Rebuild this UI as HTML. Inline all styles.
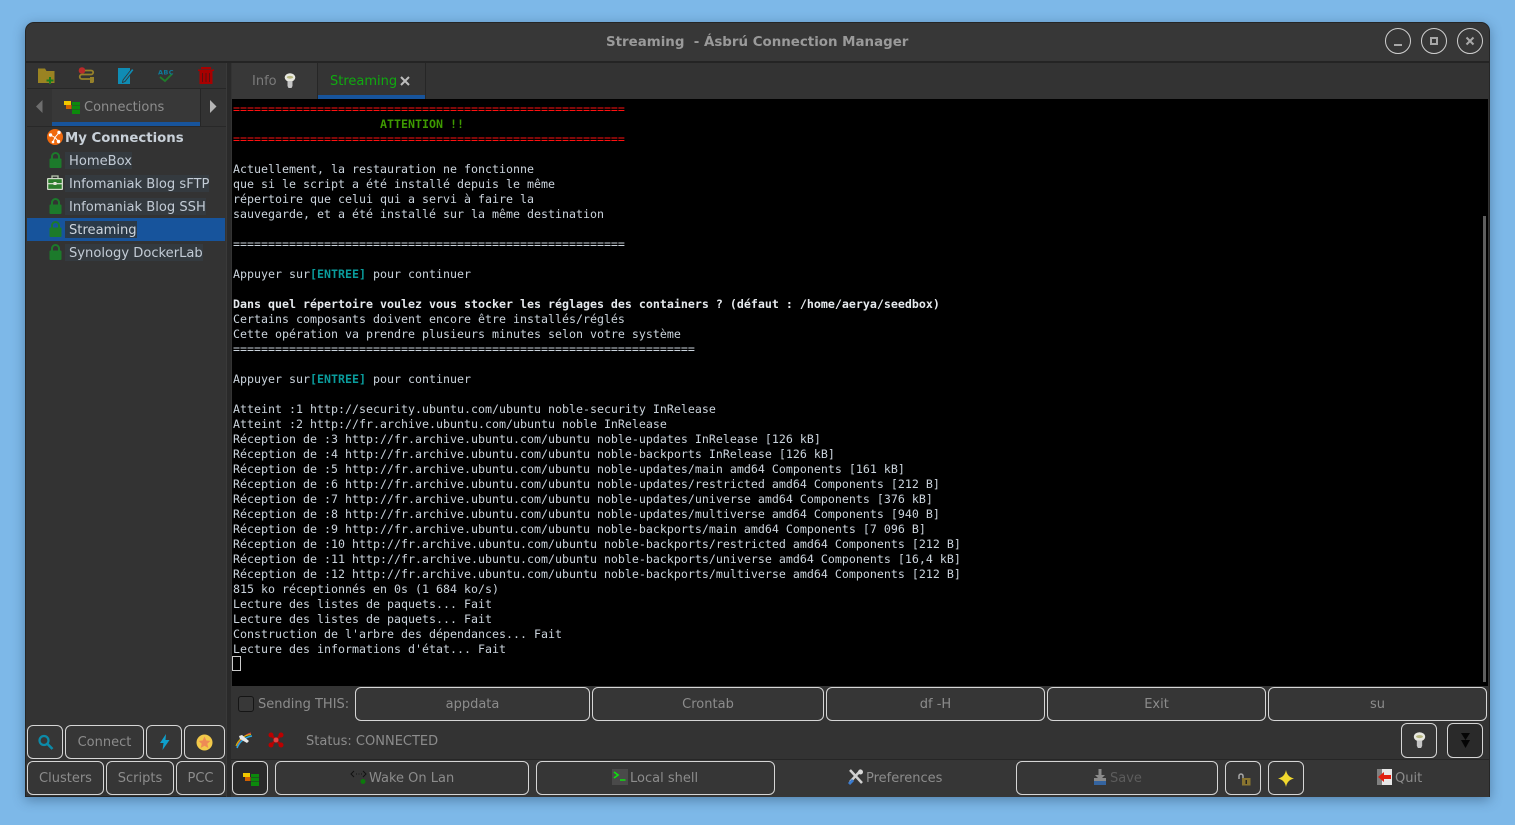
<!DOCTYPE html>
<html><head><meta charset="utf-8"><title>Streaming - Ásbrú Connection Manager</title>
<style>
html,body{margin:0;padding:0;width:1515px;height:825px;overflow:hidden;background:#7db8e8;font-family:"DejaVu Sans","Liberation Sans",sans-serif;}
.a{position:absolute}
#win{position:absolute;left:25px;top:22px;width:1465px;height:775px;background:#333;border-radius:9px 9px 0 0;box-shadow:0 3px 12px rgba(30,60,90,.45);outline:0;overflow:hidden;border:1px solid #252525;box-sizing:border-box}
#root{position:absolute;left:0;top:0;width:1515px;height:825px}
.b{position:absolute;box-sizing:border-box;border:1px solid #d6d6d6;border-radius:6px;background:#363636;color:#8c8c8c;font-size:13px;display:flex;align-items:center;justify-content:center;white-space:pre}
.nb{position:absolute;color:#8c8c8c;font-size:13px;white-space:pre}
.row{position:absolute;font-size:13.1px;color:#c3ccd6;white-space:pre;line-height:20px;height:17px;background:#343a3f;padding:0 0 0 4px}
#term{position:absolute;left:232px;top:99px;width:1256px;height:587px;background:#000;overflow:hidden}
#term pre{margin:0;position:absolute;left:1px;top:3px;font:11.63px/15px "DejaVu Sans Mono","Liberation Mono",monospace;color:#cbd4dd;letter-spacing:0}
.r{color:#ff1010}.g{color:#3e9a00;font-weight:bold}.c{color:#0a9c9c;font-weight:bold}.w{color:#e6eaee;font-weight:bold}
.ci{position:absolute;width:26px;height:26px;box-sizing:border-box;border:1px solid #cfcfcf;border-radius:50%}
svg{position:absolute;overflow:visible}
</style></head><body>
<div id="root">
<div id="win"></div>
<!-- title bar -->
<div class="a" style="left:26px;top:23px;width:1463px;height:38px;background:#373737;border-radius:8px 8px 0 0"></div>
<div class="a" style="left:26px;top:61px;width:1463px;height:2px;background:#242424"></div>
<div class="nb" style="left:606px;top:34px;font-size:13.4px;font-weight:bold;color:#9a9a9a;line-height:18px">Streaming  - Ásbrú Connection Manager</div>
<div class="ci" style="left:1385px;top:28px"></div>
<div class="a" style="left:1394px;top:44px;width:8px;height:2px;background:#a8a8a8"></div>
<div class="ci" style="left:1421px;top:28px"></div>
<div class="a" style="left:1430px;top:37px;width:8px;height:8px;box-sizing:border-box;border:2px solid #a8a8a8"></div>
<div class="ci" style="left:1457px;top:28px"></div>
<svg style="left:1466px;top:37px" width="8" height="8"><path d="M.5.5l7 7M7.5.5l-7 7" stroke="#a8a8a8" stroke-width="2"/></svg>

<!-- left pane -->
<div class="a" style="left:226px;top:63px;width:5px;height:734px;background:#2a2a2a;border-left:1px solid #3a3a3a;box-sizing:border-box"></div>
<div class="a" style="left:27px;top:88px;width:199px;height:1px;background:#272727"></div>
<svg style="left:38px;top:67px" width="17" height="17"><path d="M0 3V1.500h7L8.500 4H16.500V16H0z" fill="#9a8322"/><path d="M11 10h2v2.500h2.500v2H13V17h-2v-2.500H8.500v-2H11z" fill="#1c7d1c"/></svg>
<svg style="left:78px;top:67px" width="17" height="17"><circle cx="4" cy="3.500" r="3.300" fill="#b92a2a"/><path d="M7 3.500h6c3 0 3 4-.500 4H4c-3 0-3 4.500 0 4.500h8" fill="none" stroke="#96812a" stroke-width="1.800"/><path d="M12 10h4v5l-1 1h-3z" fill="#96812a"/></svg>
<svg style="left:118px;top:67px" width="17" height="17"><path d="M0 1h12v16H0z" fill="#0f8cb4"/><path d="M5 13L14 1.500l2 1.500-9 11.500-2.500 1z" fill="#0f8cb4" stroke="#333" stroke-width=".8"/></svg>
<svg style="left:158px;top:68px" width="16" height="15"><path d="M2 9l5 4 7-7" fill="none" stroke="#1f7d2a" stroke-width="1.800"/><text x="0" y="6.500" font-family="DejaVu Sans" font-weight="bold" font-size="6.500" fill="#0f7a99" letter-spacing=".4">ABC</text></svg>
<svg style="left:198px;top:67px" width="16" height="17"><path d="M0 2.500h16V4H0zM3 0h10v2H3z" fill="#a80000"/><path d="M1.500 4h13v13h-13z" fill="#a80000"/><path d="M4.500 6v9M8 6v9M11.500 6v9" stroke="#5a1010" stroke-width="1"/></svg>

<!-- conn tab strip -->
<div class="a" style="left:27px;top:89px;width:25px;height:37px;background:#333;border-right:1px solid #262626"></div>
<svg style="left:36px;top:100px" width="7" height="13"><path d="M6.500 0v13L0 6.500z" fill="#6e6e6e"/></svg>
<div class="a" style="left:52px;top:89px;width:148px;height:33px;background:#383838"></div>
<div class="a" style="left:52px;top:122px;width:148px;height:4px;background:#17549c"></div>
<div class="a" style="left:200px;top:89px;width:26px;height:37px;background:#333;border-left:1px solid #262626;box-sizing:border-box"></div>
<svg style="left:210px;top:100px" width="7" height="13"><path d="M0 0v13L6.500 6.500z" fill="#b5b5b5"/></svg>
<svg style="left:64px;top:101px" width="16" height="13"><rect x="0" y="0" width="7" height="4" fill="#f0c800"/><rect x="2" y="4" width="5.500" height="4" fill="#d06000"/><rect x="8" y="1" width="8" height="3.500" fill="#0c8a0c"/><rect x="8" y="5" width="8" height="3.500" fill="#0c8a0c"/><rect x="8" y="9" width="8" height="4" fill="#0c8a0c"/></svg>
<div class="nb" style="left:84px;top:99px;line-height:18px;color:#8d8d8d">Connections</div>
<div class="a" style="left:27px;top:126px;width:199px;height:1px;background:#282828"></div>

<!-- tree -->
<svg style="left:47px;top:129px" width="16" height="16"><circle cx="8" cy="8" r="8" fill="#f06a0e"/><path d="M3.500 6L8 8.500M12 3.500L8 8.500l3.500 4M8 8.500L6 13" stroke="#fff" stroke-width="1" fill="none"/><circle cx="3.500" cy="6" r="1.700" fill="#fff"/><circle cx="12" cy="3.500" r="1.700" fill="#fff"/><circle cx="11.500" cy="12.500" r="1.700" fill="#fff"/><circle cx="6" cy="13" r="1.300" fill="#fff"/></svg>
<div class="nb" style="left:65px;top:129px;font-size:13.3px;font-weight:bold;line-height:20px;color:#c8d0d8">My Connections</div>
<div class="a" style="left:27px;top:218px;width:198px;height:23px;background:#17549c"></div>
<svg width="0" height="0" style="left:0;top:0"><defs><symbol id="lk" viewBox="0 0 13 16"><path d="M3 7V4.500a3.500 3.500 0 0 1 7 0V7" fill="none" stroke="#1c7a2b" stroke-width="2"/><rect x="0.500" y="6.500" width="12" height="9.500" rx="1" fill="#1c7a2b"/></symbol></defs></svg>
<svg style="left:49px;top:152px" width="13" height="16"><use href="#lk"/></svg>
<svg style="left:47px;top:175px" width="16" height="15"><path d="M5 3V1h6v2" fill="none" stroke="#b8c8b0" stroke-width="1.300"/><rect x="0" y="3" width="16" height="12" rx="1" fill="#cfd8c8"/><rect x="1.300" y="4.200" width="13.400" height="3.800" fill="#2c7d2c"/><rect x="1.300" y="9.300" width="13.400" height="4.500" fill="#2c7d2c"/><rect x="6.500" y="7" width="3" height="3" fill="#e5e5d8"/></svg>
<svg style="left:49px;top:198px" width="13" height="16"><use href="#lk"/></svg>
<svg style="left:49px;top:221px" width="13" height="16"><use href="#lk"/></svg>
<svg style="left:49px;top:244px" width="13" height="16"><use href="#lk"/></svg>
<div class="row" style="left:65px;top:152px">HomeBox</div>
<div class="row" style="left:65px;top:175px">Infomaniak Blog sFTP</div>
<div class="row" style="left:65px;top:198px">Infomaniak Blog SSH</div>
<div class="row" style="left:65px;top:221px;background:#2b3a48;color:#cdd5dd">Streaming</div>
<div class="row" style="left:65px;top:244px">Synology DockerLab</div>

<!-- left buttons -->
<div class="b" style="left:27px;top:725px;width:36px;height:34px"><svg style="left:10px;top:8px" width="16" height="17"><circle cx="6" cy="6.500" r="4.500" fill="none" stroke="#0c8aa8" stroke-width="2.200"/><path d="M9.500 10l5 5" stroke="#0c8aa8" stroke-width="2.600"/></svg></div>
<div class="b" style="left:65px;top:725px;width:79px;height:34px">Connect</div>
<div class="b" style="left:146px;top:725px;width:36px;height:34px"><svg style="left:13px;top:8px" width="10" height="16"><path d="M6 0L0 9h3.500L2.500 16 9.500 6H5.500z" fill="#0ea0cc"/></svg></div>
<div class="b" style="left:184px;top:725px;width:41px;height:34px"><svg style="left:11px;top:8px" width="17" height="17"><circle cx="8.500" cy="8.500" r="8" fill="#f2c94a"/><path d="M8.500 2.500l1.800 4 4.200.4-3.200 2.900 1 4.200-3.800-2.200-3.800 2.200 1-4.200L2.500 6.900l4.200-.4z" fill="#ee8a55"/></svg></div>
<div class="b" style="left:27px;top:761px;width:77px;height:34px">Clusters</div>
<div class="b" style="left:106px;top:761px;width:68px;height:34px">Scripts</div>
<div class="b" style="left:176px;top:761px;width:49px;height:34px">PCC</div>

<!-- right tabs -->
<div class="a" style="left:232px;top:63px;width:85px;height:36px;background:#383838"></div>
<div class="a" style="left:317px;top:63px;width:1px;height:36px;background:#262626"></div>
<div class="a" style="left:318px;top:63px;width:107px;height:32px;background:#343434"></div>
<div class="a" style="left:318px;top:95px;width:107px;height:4px;background:#17549c"></div>
<div class="a" style="left:425px;top:63px;width:1px;height:36px;background:#262626"></div>
<div class="nb" style="left:252px;top:73px;line-height:18px;color:#7b7b7b">Info</div>
<svg style="left:284px;top:73px" width="12" height="15" viewBox="0 0 11 15"><ellipse cx="5.500" cy="4.500" rx="5.300" ry="4.300" fill="#e8e8e0"/><ellipse cx="5.500" cy="4.300" rx="3.200" ry="1.400" fill="#b8b880"/><path d="M3 8h5v5l-1 2H4l-1-2z" fill="#c5c5c5"/></svg>
<div class="nb" style="left:330px;top:73px;line-height:18px;color:#10aa10">Streaming</div>
<svg style="left:400px;top:76px" width="10" height="10"><path d="M1 1l8 8M9 1l-8 8" stroke="#bdbdbd" stroke-width="2"/></svg>

<!-- terminal -->
<div id="term"><pre><span class="r">========================================================</span>
                     <span class="g">ATTENTION !!</span>
<span class="r">========================================================</span>

Actuellement, la restauration ne fonctionne
que si le script a été installé depuis le même
répertoire que celui qui a servi à faire la
sauvegarde, et a été installé sur la même destination

========================================================

Appuyer sur<span class="c">[ENTREE]</span> pour continuer

<span class="w">Dans quel répertoire voulez vous stocker les réglages des containers ? (défaut : /home/aerya/seedbox)</span>
Certains composants doivent encore être installés/réglés
Cette opération va prendre plusieurs minutes selon votre système
==================================================================

Appuyer sur<span class="c">[ENTREE]</span> pour continuer

Atteint :1 http://security.ubuntu.com/ubuntu noble-security InRelease
Atteint :2 http://fr.archive.ubuntu.com/ubuntu noble InRelease
Réception de :3 http://fr.archive.ubuntu.com/ubuntu noble-updates InRelease [126 kB]
Réception de :4 http://fr.archive.ubuntu.com/ubuntu noble-backports InRelease [126 kB]
Réception de :5 http://fr.archive.ubuntu.com/ubuntu noble-updates/main amd64 Components [161 kB]
Réception de :6 http://fr.archive.ubuntu.com/ubuntu noble-updates/restricted amd64 Components [212 B]
Réception de :7 http://fr.archive.ubuntu.com/ubuntu noble-updates/universe amd64 Components [376 kB]
Réception de :8 http://fr.archive.ubuntu.com/ubuntu noble-updates/multiverse amd64 Components [940 B]
Réception de :9 http://fr.archive.ubuntu.com/ubuntu noble-backports/main amd64 Components [7 096 B]
Réception de :10 http://fr.archive.ubuntu.com/ubuntu noble-backports/restricted amd64 Components [212 B]
Réception de :11 http://fr.archive.ubuntu.com/ubuntu noble-backports/universe amd64 Components [16,4 kB]
Réception de :12 http://fr.archive.ubuntu.com/ubuntu noble-backports/multiverse amd64 Components [212 B]
815 ko réceptionnés en 0s (1 684 ko/s)
Lecture des listes de paquets... Fait
Lecture des listes de paquets... Fait
Construction de l'arbre des dépendances... Fait
Lecture des informations d'état... Fait</pre>
<div class="a" style="left:0;top:557px;width:9px;height:15px;box-sizing:border-box;border:1px solid #ccc"></div>
<div class="a" style="left:1251px;top:117px;width:3px;height:466px;background:#5e5e5e"></div>
</div>

<!-- sending row -->
<div class="a" style="left:238px;top:696px;width:16px;height:16px;box-sizing:border-box;border:1px solid #151515;border-radius:3px;background:#383838"></div>
<div class="nb" style="left:258px;top:696px;line-height:18px">Sending THIS:</div>
<div class="b" style="left:355px;top:687px;width:235px;height:34px">appdata</div>
<div class="b" style="left:592px;top:687px;width:232px;height:34px">Crontab</div>
<div class="b" style="left:826px;top:687px;width:219px;height:34px">df -H</div>
<div class="b" style="left:1047px;top:687px;width:219px;height:34px">Exit</div>
<div class="b" style="left:1268px;top:687px;width:219px;height:34px">su</div>

<!-- status row -->
<svg style="left:236px;top:732px" width="16" height="16"><path d="M1 15C2 9 8 3 15 1" fill="none" stroke="#e84040" stroke-width="1"/><path d="M0 14C2 8 8 3 15 2.500" fill="none" stroke="#d8c000" stroke-width="1"/><path d="M1 16C3 10 9 5 16 4" fill="none" stroke="#2aa8e0" stroke-width="1.500"/><path d="M3 4l3-1 7 6-2 2-7-4z" fill="#e8e8e8"/></svg>
<svg style="left:268px;top:732px" width="16" height="16"><path d="M3 3l10 10M13 3L3 13" stroke="#a80808" stroke-width="2.500"/><circle cx="3" cy="3" r="2.500" fill="#b00"/><circle cx="13" cy="3" r="2.500" fill="#b00"/><circle cx="3" cy="13" r="2.500" fill="#b00"/><circle cx="13" cy="13" r="2.500" fill="#b00"/><circle cx="8" cy="8" r="2.500" fill="#e84040"/></svg>
<div class="nb" style="left:306px;top:733px;line-height:18px">Status: CONNECTED</div>
<div class="b" style="left:1401px;top:723px;width:36px;height:35px"><svg style="left:11px;top:8px" width="13" height="16" viewBox="0 0 11 15"><ellipse cx="5.500" cy="4.500" rx="5.300" ry="4.300" fill="#e8e8e0"/><ellipse cx="5.500" cy="4.300" rx="3.200" ry="1.400" fill="#b8b880"/><path d="M3 8h5v5l-1 2H4l-1-2z" fill="#c5c5c5"/></svg></div>
<div class="b" style="left:1447px;top:723px;width:36px;height:35px;background:#2a2a2a"><svg style="left:13px;top:9px" width="9" height="15"><path d="M0 0h9L4.500 7zM0 7h9L4.500 15z" fill="#050505"/></svg></div>

<!-- bottom row -->
<div class="a" style="left:231px;top:759px;width:1258px;height:1px;background:#262626"></div>
<div class="a" style="left:231px;top:760px;width:1258px;height:37px;background:#363636"></div>
<div class="b" style="left:232px;top:761px;width:36px;height:34px;background:#2a2a2a"><svg style="left:10px;top:11px" width="16" height="13"><rect x="0" y="0" width="7" height="4" fill="#f0c800"/><rect x="2" y="4" width="5.500" height="4" fill="#d06000"/><rect x="8" y="1" width="8" height="3.500" fill="#0c8a0c"/><rect x="8" y="5" width="8" height="3.500" fill="#0c8a0c"/><rect x="8" y="9" width="8" height="4" fill="#0c8a0c"/></svg></div>
<div class="b" style="left:275px;top:761px;width:254px;height:34px"></div>
<svg style="left:351px;top:769px" width="16" height="16"><path d="M3 2L0 5l3 3M12 2l3 3-3 3" fill="none" stroke="#111" stroke-width="1"/><path d="M5 5h1M7.500 5h1M10 5h1" stroke="#111"/><circle cx="12" cy="12.500" r="2.500" fill="#0c7a0c"/></svg>
<div class="nb" style="left:369px;top:770px;line-height:18px">Wake On Lan</div>
<div class="b" style="left:536px;top:761px;width:239px;height:34px"></div>
<div class="a" style="left:612px;top:769px;width:16px;height:16px;background:#4a4a4a"></div>
<svg style="left:614px;top:772px" width="12" height="10"><path d="M0 0l4 3-4 3" fill="none" stroke="#0ee00e" stroke-width="1.700"/><path d="M6 8h5.500" stroke="#0ee00e" stroke-width="1.500"/></svg>
<div class="nb" style="left:630px;top:770px;line-height:18px">Local shell</div>
<svg style="left:848px;top:769px" width="15" height="16"><path d="M2 1l12 13" stroke="#d0d0d0" stroke-width="2.500"/><path d="M13 1L2 13" stroke="#d0d0d0" stroke-width="2.500"/><path d="M1 15l4-4" stroke="#3a7cd0" stroke-width="3"/><circle cx="12.500" cy="3" r="2.500" fill="#d8d8d8"/></svg>
<div class="nb" style="left:866px;top:770px;line-height:18px">Preferences</div>
<div class="b" style="left:1016px;top:761px;width:202px;height:34px"></div>
<svg style="left:1094px;top:769px" width="12" height="16"><path d="M4.500 0h3v6H11L6 11 1 6h3.500z" fill="#8a8a8a"/><rect x="0" y="9" width="12" height="3" fill="#8a8a8a"/><rect x="0" y="12" width="12" height="4" fill="#3464a0"/></svg>
<div class="nb" style="left:1110px;top:770px;line-height:18px;color:#5c5c5c">Save</div>
<div class="b" style="left:1225px;top:761px;width:36px;height:34px"><svg style="left:12px;top:11px" width="13" height="13"><path d="M1 6V3a2 2 0 0 1 4 0v3" fill="none" stroke="#a8a8a8" stroke-width="1.500"/><rect x="4" y="5" width="8.500" height="7.500" fill="#8a7530"/><rect x="7.500" y="7" width="1.500" height="4" fill="#222"/></svg></div>
<div class="b" style="left:1268px;top:761px;width:36px;height:34px"><svg style="left:9px;top:8px" width="16" height="17"><path d="M8 0q1.200 7 8 8.500-6.800 1.500-8 8.500-1.200-7-8-8.500Q6.800 7 8 0z" fill="#f2d92e"/></svg></div>
<svg style="left:1377px;top:769px" width="16" height="16"><rect x="0" y="0" width="15" height="16" fill="#e8e8e8"/><rect x="0" y="0" width="5" height="16" fill="#808080"/><path d="M1 8l6-5v3h7v4H7v3z" fill="#e02010"/></svg>
<div class="nb" style="left:1395px;top:770px;line-height:18px">Quit</div>
</div>
</body></html>
